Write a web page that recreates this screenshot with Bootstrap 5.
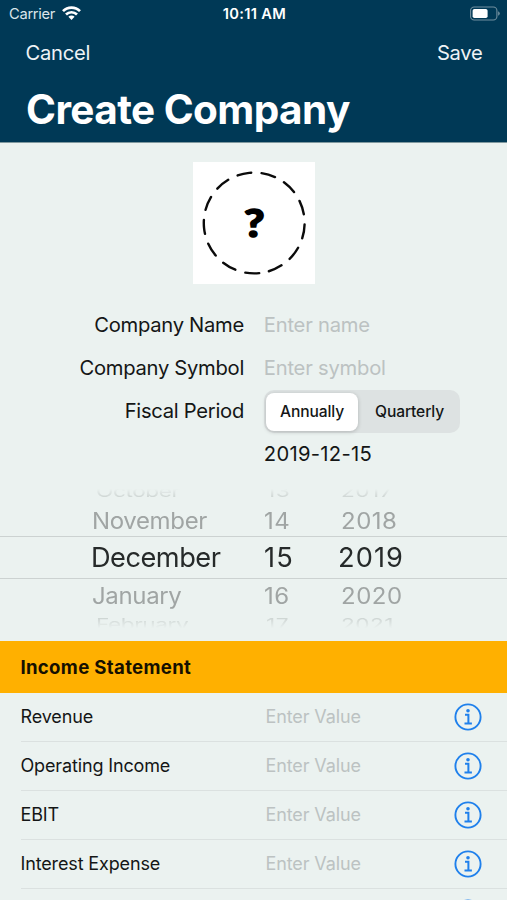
<!DOCTYPE html>
<html lang="en">
<head>
<meta charset="utf-8">
<meta name="viewport" content="width=device-width, initial-scale=1">
<title>Create Company</title>
<link rel="stylesheet" href="https://cdn.jsdelivr.net/npm/bootstrap@5.3.0/dist/css/bootstrap.min.css">
<style>
html, body { height: 100%; }
body { background: #ebf2f0; color: #141616; font-family: Inter, "Liberation Sans", sans-serif; font-size: 20.2px; letter-spacing: -.28px; overflow: hidden; }
.screen { width: 507px; height: 900px; overflow: hidden; white-space: nowrap; }
.top-area { height: 143px; background: #003956; color: #fff; border-bottom: 1px solid #80999f; }
.status-bar { height: 28px; padding: 0 7px 0 9px; font-size: 14.7px; display: grid; grid-template-columns: 1fr auto 1fr; }
.carrier { letter-spacing: -.3px; color: #dbe5ea; }
.clock { font-weight: 600; letter-spacing: .3px; }
.nav-row { height: 50px; padding: 0 24.5px 0 25.6px; color: #eef3f6; }
.nav-row a { line-height: 30px; }
.page-title { font-size: 40.5px; font-weight: 700; letter-spacing: -.57px; line-height: 63px; padding-left: 26px; }
.logo-tile { width: 122px; height: 122px; margin-top: 19px; background: #fff; }
.form-block { margin-top: 20px; }
.form-line { height: 43px; display: grid; grid-template-columns: 244px 1fr; column-gap: 19.8px; align-items: center; }
.field { background: none; border: 0; outline: 0; padding: 0; height: 30px; letter-spacing: -.22px; width: 200px; }
.field::placeholder { color: #bcc2c2; opacity: 1; }
.segments { width: 196px; height: 43px; border-radius: 10px; background: #dde2e2; padding: 2.5px; font-size: 15.6px; font-weight: 500; letter-spacing: -.12px; }
.segments > button { background: none; border: 0; padding: 0; font-weight: 500; letter-spacing: inherit; color: #141616; }
.segments > .chosen { width: 91.5px; background: #fff; border-radius: 8px; box-shadow: 0 1px 4px rgba(0,0,0,.2); }
.date-text { letter-spacing: .3px; line-height: 28px; margin-top: -1px; }
.picker { height: 144px; margin-top: 9.5px; overflow: hidden; -webkit-mask-image: linear-gradient(transparent 3px, #000 13px, #000 130px, transparent 142px); mask-image: linear-gradient(transparent 3px, #000 13px, #000 130px, transparent 142px); }
.wheel-row { display: grid; grid-template: 100% / 172px 77px 1fr; align-items: center; padding-left: 92px; line-height: 1; }
.wheel-row > span { transform-origin: 0 50%; }
.near { height: 32px; font-size: 24px; letter-spacing: -.35px; color: #a0a5a4; }
.near > span { transform: translateY(1.5px) scaleY(.93); }
.near > span + span, .far > span + span { letter-spacing: .5px; }
.far { height: 12px; margin-bottom: 6.5px; font-size: 22.6px; letter-spacing: -.4px; color: #c8cfcd; padding-left: 96px; grid-template-columns: 170px 75px 1fr; }
.far > span { transform: translateY(.5px) scaleY(.72); }
.near + .far { margin: 7px 0 0; }
.current { height: 43px; font-size: 27.2px; letter-spacing: -.5px; border: solid #ccd2d1; border-width: 1px 0; padding-left: 91px; grid-template-columns: 173px 74px 1fr; color: #262a2a; }
.current > span + span { letter-spacing: 1.1px; }
.section-head { height: 52px; margin-top: 11.5px; background: #ffb000; color: #151000; font-size: 18.6px; font-weight: 700; letter-spacing: .33px; line-height: 52px; padding-left: 20.4px; }
.entry { height: 48.9px; margin-left: 20.5px; border-bottom: 1px solid #dbe1e0; font-size: 18px; letter-spacing: -.14px; display: grid; grid-template-columns: 245px 1fr 53px; align-items: center; }
.entry .field { letter-spacing: -.11px; width: 150px; }
svg { display: block; }
</style>
<script src="https://cdn.jsdelivr.net/npm/bootstrap@5.3.0/dist/js/bootstrap.bundle.min.js"></script>
</head>
<body>
<svg width="0" height="0" class="position-absolute" aria-hidden="true">
  <symbol id="info" viewBox="0 0 28 28">
    <circle cx="14" cy="14" r="12.6" fill="none" stroke="#1f80ec" stroke-width="1.9"/>
    <circle cx="14" cy="7.7" r="1.8" fill="#1f80ec"/>
    <path d="M11 11.8h3.4v8.4M10.5 20.4h7.4" fill="none" stroke="#1f80ec" stroke-width="2"/>
  </symbol>
</svg>
<main class="screen">
  <header class="top-area">
    <div class="status-bar align-items-center">
      <div class="d-flex align-items-center carrier">Carrier
        <svg style="margin-left:7px;margin-top:-2px" width="19" height="14" viewBox="0 0 19 14" fill="none" stroke="#fff" stroke-width="2.7"><path d="M1 5.1a12 12 0 0 1 17 0"/><path d="M4 8.5a7.8 7.8 0 0 1 11 0"/><path d="M9.5 13.9 6.4 10.8a4.4 4.4 0 0 1 6.2 0z" fill="#fff" stroke="none"/></svg>
      </div>
      <div class="clock">10:11 AM</div>
      <svg class="ms-auto" width="30" height="15" viewBox="0 0 30 15" style="margin-top:-2px"><rect x=".6" y="1" width="26.3" height="13" rx="3.6" fill="none" stroke="#71909f" stroke-width="1.1"/><rect x="2.6" y="2.9" width="15" height="9.2" rx="1.8" fill="#fff"/><path d="M28.1 5.2q1.7.8 1.7 2.3t-1.7 2.3z" fill="#71909f"/></svg>
    </div>
    <nav class="nav-row d-flex justify-content-between align-items-center">
      <a class="text-reset text-decoration-none" href="#">Cancel</a>
      <a class="text-reset text-decoration-none" href="#">Save</a>
    </nav>
    <h1 class="page-title m-0">Create Company</h1>
  </header>

  <div class="logo-tile mx-auto">
    <svg width="122" height="122" viewBox="0 0 122 122">
      <circle cx="61.2" cy="61" r="50.4" fill="none" stroke="#0b0b0b" stroke-width="2.4" stroke-linecap="round" stroke-dasharray="14 10.36" transform="rotate(84.3 61.2 61)"/>
      <text transform="translate(61.4 74.6) scale(1.18 1)" text-anchor="middle" font-family="Lato, sans-serif" font-weight="900" font-size="37.5" letter-spacing="0" stroke="#000" stroke-width="1.5">?</text>
    </svg>
  </div>

  <form class="form-block">
    <div class="form-line"><label class="text-end" for="cname">Company Name</label><input class="field" id="cname" placeholder="Enter name"></div>
    <div class="form-line"><label class="text-end" for="csym">Company Symbol</label><input class="field" id="csym" placeholder="Enter symbol"></div>
    <div class="form-line"><span class="text-end">Fiscal Period</span>
      <div class="segments d-flex"><button type="button" class="chosen">Annually</button><button type="button" class="flex-fill ps-1">Quarterly</button></div>
    </div>
    <div class="form-line"><span></span><span class="date-text">2019-12-15</span></div>
  </form>

  <section class="picker">
    <div class="wheel-row far"><span>October</span><span>13</span><span>2017</span></div>
    <div class="wheel-row near"><span>November</span><span>14</span><span>2018</span></div>
    <div class="wheel-row current"><span>December</span><span>15</span><span>2019</span></div>
    <div class="wheel-row near"><span>January</span><span>16</span><span>2020</span></div>
    <div class="wheel-row far"><span>February</span><span>17</span><span>2021</span></div>
  </section>

  <h2 class="section-head mb-0">Income Statement</h2>
  <section>
    <div class="entry"><span>Revenue</span><input class="field" placeholder="Enter Value"><svg width="28" height="28"><use href="#info"/></svg></div>
    <div class="entry"><span>Operating Income</span><input class="field" placeholder="Enter Value"><svg width="28" height="28"><use href="#info"/></svg></div>
    <div class="entry"><span>EBIT</span><input class="field" placeholder="Enter Value"><svg width="28" height="28"><use href="#info"/></svg></div>
    <div class="entry"><span>Interest Expense</span><input class="field" placeholder="Enter Value"><svg width="28" height="28"><use href="#info"/></svg></div>
    <div class="entry"><span></span><span></span><svg width="28" height="28"><use href="#info"/></svg></div>
  </section>
</main>
</body>
</html>
